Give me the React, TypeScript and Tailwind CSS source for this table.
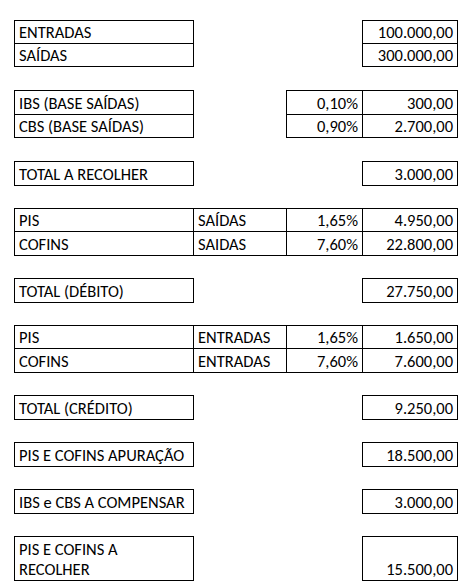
import { ReactNode } from 'react';

type Row = {
  h: 'short' | 'tall' | 'double';
  a?: ReactNode;
  b?: string;
  c?: string;
  d?: string;
  boxed?: 'ad' | 'acd' | 'abcd';
};

// heights alternate 23/24 like the sheet at this zoom
const rows: Row[] = [
  { h: 'short', a: 'ENTRADAS', d: '100.000,00', boxed: 'ad' },
  { h: 'short', a: 'SAÍDAS', d: '300.000,00', boxed: 'ad' },
  { h: 'tall' },
  { h: 'tall', a: 'IBS (BASE SAÍDAS)', c: '0,10%', d: '300,00', boxed: 'acd' },
  { h: 'short', a: 'CBS (BASE SAÍDAS)', c: '0,90%', d: '2.700,00', boxed: 'acd' },
  { h: 'tall' },
  { h: 'tall', a: 'TOTAL A RECOLHER', d: '3.000,00', boxed: 'ad' },
  { h: 'short' },
  { h: 'short', a: 'PIS', b: 'SAÍDAS', c: '1,65%', d: '4.950,00', boxed: 'abcd' },
  { h: 'tall', a: 'COFINS', b: 'SAIDAS', c: '7,60%', d: '22.800,00', boxed: 'abcd' },
  { h: 'short' },
  { h: 'tall', a: 'TOTAL (DÉBITO)', d: '27.750,00', boxed: 'ad' },
  { h: 'short' },
  { h: 'short', a: 'PIS', b: 'ENTRADAS', c: '1,65%', d: '1.650,00', boxed: 'abcd' },
  { h: 'tall', a: 'COFINS', b: 'ENTRADAS', c: '7,60%', d: '7.600,00', boxed: 'abcd' },
  { h: 'short' },
  { h: 'tall', a: 'TOTAL (CRÉDITO)', d: '9.250,00', boxed: 'ad' },
  { h: 'short' },
  { h: 'tall', a: 'PIS E COFINS APURAÇÃO', d: '18.500,00', boxed: 'ad' },
  { h: 'short' },
  { h: 'tall', a: 'IBS e CBS A COMPENSAR', d: '3.000,00', boxed: 'ad' },
  { h: 'short' },
  {
    h: 'double',
    a: (
      <>
        PIS E COFINS A
        <br />
        RECOLHER
      </>
    ),
    d: '15.500,00',
    boxed: 'ad',
  },
];

const heightClass = {
  short: 'h-[23px]',
  tall: 'h-[24px]',
  double: 'h-[44px]',
};

function Cell({ on, right, children }: { on: boolean; right?: boolean; children?: ReactNode }) {
  return (
    <td
      className={`${on ? 'border border-black' : ''} ${right ? 'text-right pr-[4px]' : 'pl-[4px]'} align-bottom pb-[1px] leading-[20px] whitespace-nowrap`}
    >
      {children}
    </td>
  );
}

export default function App() {
  return (
    <div className="min-h-screen w-[468px] bg-white pt-[20px] pl-[14px] text-[16.5px] text-black font-['Carlito','Open_Sans',sans-serif]">
      <table className="table-fixed border-collapse">
        <colgroup>
          <col className="w-[179px]" />
          <col className="w-[93px]" />
          <col className="w-[76px]" />
          <col className="w-[95px]" />
        </colgroup>
        <tbody>
          {rows.map((r, i) => (
            <tr key={i} className={heightClass[r.h]}>
              <Cell on={!!r.boxed}>{r.a}</Cell>
              <Cell on={r.boxed === 'abcd'}>{r.b}</Cell>
              <Cell on={r.boxed === 'abcd' || r.boxed === 'acd'} right>
                {r.c}
              </Cell>
              <Cell on={!!r.boxed} right>
                {r.d}
              </Cell>
            </tr>
          ))}
        </tbody>
      </table>
    </div>
  );
}
